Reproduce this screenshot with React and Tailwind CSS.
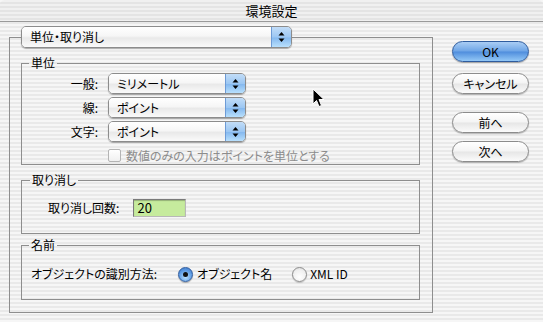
import React from "react";

const FONT = { fontFamily: '"Noto Sans CJK JP", "Noto Sans", sans-serif' };

function Arrows() {
  return (
    <svg width="7" height="12" viewBox="0 0 7 12">
      <polygon points="3.5,1 6.5,4.5 0.5,4.5" fill="#000" />
      <polygon points="0.5,7.5 6.5,7.5 3.5,11" fill="#000" />
    </svg>
  );
}

function Select({ text, className }) {
  return (
    <div
      className={`flex h-[21px] rounded-[5px] border border-[#8c8c8c] overflow-hidden shadow-[0_1px_1px_rgba(0,0,0,0.3)] ${className}`}
    >
      <div className="flex-1 flex items-center pl-[8px] text-[12px] text-black bg-[linear-gradient(to_bottom,#ffffff,#f6f6f6_45%,#e9e9e9_55%,#fafafa)]">
        {text}
      </div>
      <div className="w-[20px] flex items-center justify-center border-l border-[#6d9bd6] bg-[linear-gradient(to_bottom,#c2ddf8,#9cc7f3_50%,#86b9ef_55%,#b8e0fd)]">
        <Arrows />
      </div>
    </div>
  );
}

function Button({ children, primary }) {
  return (
    <div
      className={
        primary
          ? "h-[21px] w-[77px] rounded-full border border-[#2f5c9e] flex items-center justify-center text-[12px] text-black bg-[linear-gradient(to_bottom,#aacdf4,#6ea5e6_48%,#4f8ddd_52%,#93c8f6)] shadow-[0_1px_1px_rgba(0,0,0,0.3)]"
          : "h-[21px] w-[77px] rounded-full border border-[#8c8c8c] flex items-center justify-center text-[12px] text-black bg-[linear-gradient(to_bottom,#ffffff,#f4f4f4_48%,#e6e6e6_52%,#fbfbfb)] shadow-[0_1px_1px_rgba(0,0,0,0.25)]"
      }
    >
      {children}
    </div>
  );
}

function Radio({ checked }) {
  return checked ? (
    <div className="w-[15px] h-[15px] rounded-full border border-[#2f5c9e] flex items-center justify-center bg-[radial-gradient(circle_at_50%_70%,#b8e0ff,#5b99e2_60%,#3c77c8)] shadow-[0_1px_1px_rgba(0,0,0,0.3)]">
      <div className="w-[5px] h-[5px] rounded-full bg-[#111]" />
    </div>
  ) : (
    <div className="w-[15px] h-[15px] rounded-full border border-[#8c8c8c] bg-[radial-gradient(circle_at_50%_70%,#ffffff,#f0f0f0_60%,#d8d8d8)] shadow-[0_1px_1px_rgba(0,0,0,0.2)]" />
  );
}

export default function App() {
  return (
    <div
      className="relative w-[543px] h-[322px] overflow-hidden text-black bg-[image:repeating-linear-gradient(to_bottom,#f6f6f6_0px,#f6f6f6_2px,#e9e9e9_2px,#e9e9e9_4px)] [font-feature-settings:'palt']"
      style={FONT}
    >
      {/* title bar */}
      <div className="h-[22px] border-b border-[#9a9a9a] flex items-center justify-center text-[13px] bg-[image:repeating-linear-gradient(to_bottom,#f0f0f0_0px,#f0f0f0_2px,#e4e4e4_2px,#e4e4e4_4px)] rounded-t-[5px]">
        環境設定
      </div>

      <div className="flex">
        {/* left */}
        <div className="ml-[9px] w-[424px] pt-[4px]">
          <fieldset className="border border-[#8e8e8e] pl-[11px] pr-[12px] pb-[12px]">
            <legend className="p-0">
              <Select text="単位・取り消し" className="w-[271px] h-[22px]" />
            </legend>

            {/* 単位 */}
            <fieldset className="mt-[7px] border border-[#8e8e8e] pb-[1px]">
              <legend className="ml-[7px] px-[2px] text-[12px] leading-[16px]">単位</legend>
              <div className="pt-[2px] flex flex-col gap-[3px]">
                {[
                  ["一般:", "ミリメートル"],
                  ["線:", "ポイント"],
                  ["文字:", "ポイント"],
                ].map(([l, v]) => (
                  <div key={l} className="flex items-center">
                    <div className="w-[76px] text-right text-[12px]">{l}</div>
                    <Select text={v} className="ml-[10px] w-[138px]" />
                  </div>
                ))}
              </div>
              <div className="mt-[6px] h-[15px] flex items-center pl-[86px]">
                <div className="w-[13px] h-[13px] rounded-[2px] border border-[#b4b4b4] bg-[linear-gradient(to_bottom,#ffffff,#f0f0f0)]" />
                <div className="ml-[5px] text-[12px] text-[#8c8c8c]">
                  数値のみの入力はポイントを単位とする
                </div>
              </div>
            </fieldset>

            {/* 取り消し */}
            <fieldset className="mt-[7px] border border-[#8e8e8e] pb-[16px]">
              <legend className="ml-[8px] px-[2px] text-[12px] leading-[16px]">取り消し</legend>
              <div className="mt-[11px] flex items-center pl-[26px]">
                <div className="text-[12px]">取り消し回数:</div>
                <div className="ml-[14px] w-[53px] h-[18px] border border-[#7a7a7a] border-b-[#b8b8b8] border-r-[#b8b8b8] bg-[#c6eb9d] flex items-center pl-[3px] text-[13px] shadow-[inset_0_1px_1px_rgba(0,0,0,0.25)]">
                  20
                </div>
              </div>
            </fieldset>

            {/* 名前 */}
            <fieldset className="mt-[3px] border border-[#8e8e8e] pb-[17px]">
              <legend className="ml-[7px] px-[2px] text-[12px] leading-[16px]">名前</legend>
              <div className="mt-[13px] h-[16px] flex items-center pl-[9px] text-[12px]">
                <div>オブジェクトの識別方法:</div>
                <div className="ml-[21px]">
                  <Radio checked />
                </div>
                <div className="ml-[4px]">オブジェクト名</div>
                <div className="ml-[20px]">
                  <Radio />
                </div>
                <div className="ml-[3px]">XML ID</div>
              </div>
            </fieldset>
          </fieldset>
        </div>

        {/* right buttons */}
        <div className="ml-[19px] pt-[19px] flex flex-col">
          <Button primary>OK</Button>
          <div className="mt-[11px]">
            <Button>キャンセル</Button>
          </div>
          <div className="mt-[18px]">
            <Button>前へ</Button>
          </div>
          <div className="mt-[8px]">
            <Button>次へ</Button>
          </div>
        </div>
      </div>

      {/* mouse cursor */}
      <svg
        className="absolute left-[312px] top-[88px]"
        width="13"
        height="20"
        viewBox="0 0 13 20"
      >
        <path
          d="M1 1 L1 16 L4.5 12.5 L7 18.5 L9.5 17.5 L7 11.5 L12 11.5 Z"
          fill="#000"
          stroke="#fff"
          strokeWidth="1"
          strokeLinejoin="round"
        />
      </svg>
    </div>
  );
}
